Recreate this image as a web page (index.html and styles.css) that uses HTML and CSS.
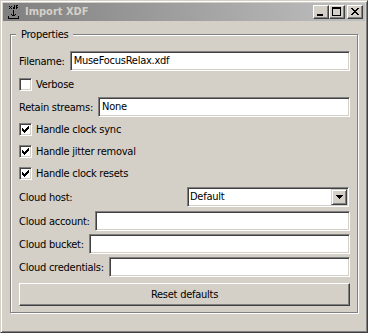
FILE: index.html
```html
<!DOCTYPE html>
<html>
<head>
<meta charset="utf-8">
<link rel="stylesheet" href="styles.css">
</head>
<body>
<div class="window">
  <div class="titlebar">
    <svg class="appicon" width="16" height="16" viewBox="0 0 16 16" shape-rendering="crispEdges">
      <path d="M4 2h1v1h-1zM6 2h1v1h-1zM5 3h1v1h-1zM4 4h1v1h-1zM6 4h1v1h-1zM9 1h1v4h-2v-2h1zM11 1h2v1h-1v1h1v1h-1v1h-1z" fill="#000"/>
      <path d="M8 6h1v6h-1zM6 10h1v1h-1zM10 10h1v1h-1zM7 11h1v1h-1zM9 11h1v1h-1zM3 12h1v2h9v-2h1v3h-11z" fill="#000"/>
    </svg>
    <span class="title">Import XDF</span>
    <div class="tbtns">
      <div class="tbtn"><svg width="14" height="12" viewBox="0 0 14 12" shape-rendering="crispEdges"><path d="M3 8h6v2h-6z" fill="#000"/></svg></div>
      <div class="tbtn"><svg width="14" height="12" viewBox="0 0 14 12" shape-rendering="crispEdges"><path d="M2 1h9v9h-9zM3 3v6h7v-6z" fill="#000" fill-rule="evenodd"/></svg></div>
      <div class="tbtn close"><svg width="14" height="12" viewBox="0 0 14 12" shape-rendering="crispEdges"><path d="M3 2h2v1h1v1h2v-1h1v-1h2v1h-1v1h-1v1h-1v1h1v1h1v1h1v1h-2v-1h-1v-1h-2v1h-1v1h-2v-1h1v-1h1v-1h1v-1h-1v-1h-1v-1h-1z" fill="#000"/></svg></div>
    </div>
  </div>
  <div class="content">
    <div class="group">
      <div class="legend">Properties</div>
      <div class="rows">
        <div class="row"><span class="label">Filename:</span><div class="input">MuseFocusRelax.xdf</div></div>
        <div class="row"><span class="check"></span><span class="label">Verbose</span></div>
        <div class="row"><span class="label">Retain streams:</span><div class="input">None</div></div>
        <div class="row crow"><span class="check on"><svg width="7" height="7" viewBox="0 0 7 7" shape-rendering="crispEdges"><path d="M0 2h1v3h-1zM1 3h1v3h-1zM2 4h1v3h-1zM3 3h1v3h-1zM4 2h1v3h-1zM5 1h1v3h-1zM6 0h1v3h-1z" fill="#000"/></svg></span><span class="label">Handle clock sync</span></div>
        <div class="row crow"><span class="check on"><svg width="7" height="7" viewBox="0 0 7 7" shape-rendering="crispEdges"><path d="M0 2h1v3h-1zM1 3h1v3h-1zM2 4h1v3h-1zM3 3h1v3h-1zM4 2h1v3h-1zM5 1h1v3h-1zM6 0h1v3h-1z" fill="#000"/></svg></span><span class="label">Handle jitter removal</span></div>
        <div class="row crow"><span class="check on"><svg width="7" height="7" viewBox="0 0 7 7" shape-rendering="crispEdges"><path d="M0 2h1v3h-1zM1 3h1v3h-1zM2 4h1v3h-1zM3 3h1v3h-1zM4 2h1v3h-1zM5 1h1v3h-1zM6 0h1v3h-1z" fill="#000"/></svg></span><span class="label">Handle clock resets</span></div>
        <div class="row hrow"><span class="label">Cloud host:</span>
          <div class="select"><span class="seltext">Default</span><span class="selbtn"><svg width="7" height="4" viewBox="0 0 7 4" shape-rendering="crispEdges"><path d="M0 0h7v1h-1v1h-1v1h-1v1h-1v-1h-1v-1h-1v-1h-1z" fill="#000"/></svg></span></div>
        </div>
        <div class="row"><span class="label">Cloud account:</span><div class="input"></div></div>
        <div class="row"><span class="label">Cloud bucket:</span><div class="input"></div></div>
        <div class="row"><span class="label">Cloud credentials:</span><div class="input"></div></div>
        <div class="button">Reset defaults</div>
      </div>
    </div>
  </div>
</div>
</body>
</html>
```
FILE: styles.css
```css
html, body {
  margin: 0;
  padding: 0;
  background: #d4d0c8;
}
body {
  font-family: "DejaVu Sans Condensed", "Liberation Sans", sans-serif;
  font-size: 11px;
  letter-spacing: -0.25px;
  color: #000;
}
.window {
  width: 368px;
  height: 333px;
  box-sizing: border-box;
  background: #d4d0c8;
  border: 1px solid;
  border-color: #d4d0c8 #404040 #404040 #d4d0c8;
  box-shadow: inset 1px 1px 0 #fff, inset -1px -1px 0 #808080;
  padding: 2px;
  display: flex;
  flex-direction: column;
}
.titlebar {
  height: 18px;
  flex: none;
  display: flex;
  align-items: center;
  background: linear-gradient(to right, #808080, #c0c0c0);
}
.appicon {
  margin-left: 2px;
  flex: none;
}
.title {
  margin-left: 4px;
  font-weight: bold;
  color: #d4d0c8;
  line-height: 18px;
  letter-spacing: 0;
}
.tbtns {
  margin-left: auto;
  margin-right: 2px;
  display: flex;
}
.tbtn {
  width: 16px;
  height: 14px;
  box-sizing: border-box;
  background: #d4d0c8;
  border: 1px solid;
  border-color: #fff #404040 #404040 #fff;
  box-shadow: inset -1px -1px 0 #808080;
  display: flex;
}
.tbtn svg { display: block; }
.tbtn.close { margin-left: 2px; }
.content {
  flex: 1;
  display: flex;
  flex-direction: column;
}
.group {
  margin: 13px 7px 0 7px;
  border: 1px solid #808080;
  box-shadow: 1px 1px 0 #fff, inset 1px 1px 0 #fff;
  padding: 0 7px 6px 8px;
}
.legend {
  display: table;
  margin: -7px 0 0 -3px;
  padding: 0 5px;
  height: 13px;
  line-height: 13px;
  background: #d4d0c8;
}
.rows {
  margin-top: 10px;
  display: flex;
  flex-direction: column;
  gap: 3px;
}
.row {
  height: 20px;
  display: flex;
  align-items: center;
  gap: 4px;
}
.row.crow { height: 19px; }
.row.hrow { height: 22px; }
.label {
  white-space: nowrap;
  line-height: 13px;
}
.input {
  flex: 1;
  height: 20px;
  box-sizing: border-box;
  background: #fff;
  border: 1px solid;
  border-color: #808080 #fff #fff #808080;
  box-shadow: inset 1px 1px 0 #404040, inset -1px -1px 0 #d4d0c8;
  padding: 0 3px;
  line-height: 18px;
  margin-left: 1px;
}
.check {
  width: 13px;
  height: 13px;
  box-sizing: border-box;
  flex: none;
  background: #fff;
  border: 1px solid;
  border-color: #808080 #fff #fff #808080;
  box-shadow: inset 1px 1px 0 #404040, inset -1px -1px 0 #d4d0c8;
  padding: 2px;
}
.check svg { display: block; }
.select {
  margin-left: auto;
  margin-right: 1px;
  width: 162px;
  height: 20px;
  box-sizing: border-box;
  background: #fff;
  border: 1px solid;
  border-color: #808080 #fff #fff #808080;
  box-shadow: inset 1px 1px 0 #404040, inset -1px -1px 0 #d4d0c8;
  padding: 1px 1px 1px 2px;
  display: flex;
  align-items: center;
}
.seltext {
  flex: 1;
  line-height: 16px;
}
.selbtn {
  width: 16px;
  height: 16px;
  box-sizing: border-box;
  background: #d4d0c8;
  border: 1px solid;
  border-color: #d4d0c8 #404040 #404040 #d4d0c8;
  box-shadow: inset 1px 1px 0 #fff, inset -1px -1px 0 #808080;
  display: flex;
  align-items: center;
  justify-content: center;
}
.selbtn svg { display: block; }
.button {
  margin-top: 3px;
  height: 23px;
  box-sizing: border-box;
  border: 1px solid;
  border-color: #fff #404040 #404040 #fff;
  box-shadow: inset -1px -1px 0 #808080;
  display: flex;
  align-items: center;
  justify-content: center;
  line-height: 13px;
}
```
